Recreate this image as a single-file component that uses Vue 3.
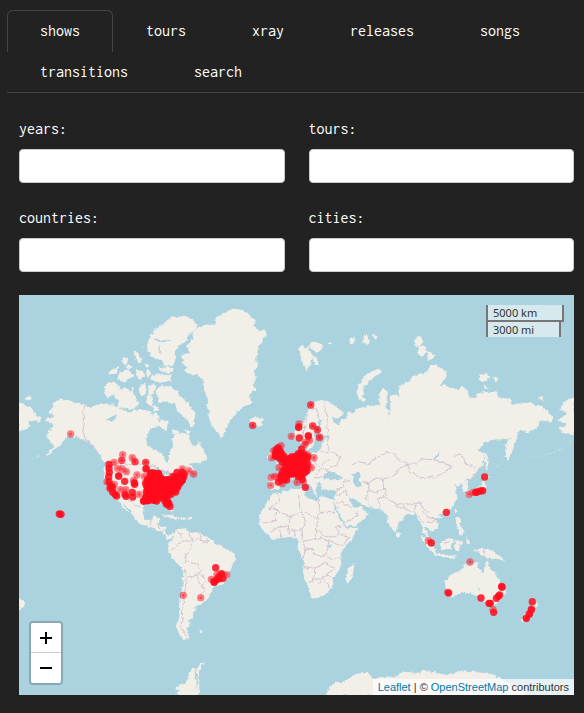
<script setup>
import { ref } from 'vue'

const tabs = ['shows', 'tours', 'xray', 'releases', 'songs', 'transitions', 'search']
const active = ref('shows')
const filters = ['years', 'tours', 'countries', 'cities']

// Land outlines, three drawing units to one map pixel
const land = [
  // North America
  'M87,346 103,340 100,330 113,322 125,312 150,321 193,330 215,340 232,334 250,323 262,330 285,330 305,343 330,352 345,345 375,348 395,350 398,362 410,352 420,366 414,378 426,384 418,392 404,394 388,410 380,432 383,452 410,468 432,478 438,500 447,506 455,492 450,472 466,452 462,430 474,414 500,418 514,440 526,456 540,442 555,472 566,490 545,500 515,504 492,522 516,512 526,526 512,536 500,546 485,550 470,570 450,590 440,602 436,614 450,628 462,640 458,650 448,644 435,622 415,618 390,620 374,630 370,656 380,678 396,680 404,666 420,668 412,688 420,692 440,700 437,715 447,722 460,718 474,704 468,722 450,732 436,722 426,706 410,702 392,694 368,688 345,670 338,650 322,634 308,612 316,634 326,650 314,638 298,616 280,604 266,578 258,555 256,530 262,506 245,488 236,470 220,450 195,432 170,424 145,422 135,438 115,455 98,470 82,478 108,456 100,445 88,437 86,418 92,405 108,392 98,384 80,380 85,368 108,370 100,355Z',
  // Greenland
  'M560,92 540,97 522,112 524,128 506,154 516,172 488,182 494,198 487,206 510,214 497,226 512,236 530,238 548,245 555,265 558,290 568,310 565,330 570,350 572,372 583,396 596,414 600,424 610,426 622,392 637,372 652,350 678,332 700,322 686,300 708,282 698,268 712,246 704,230 715,214 710,192 716,160 724,146 742,122 738,106 718,106 700,94 708,80 690,56 668,46 640,42 612,56 590,72 594,86 566,92Z',
  // Canadian islands
  'M462,66 478,62 505,66 520,78 533,90 530,102 510,116 500,135 480,152 465,170 470,190 460,212 440,210 430,192 415,194 400,188 388,170 386,150 394,122 408,118 402,106 420,98 432,84Z',
  'M415,218 440,216 462,222 455,232 430,230Z M400,240 455,242 455,258 420,262 400,254Z M345,170 358,176 368,192 365,204 350,194Z M352,225 372,230 378,245 362,254 350,240Z M378,204 392,210 385,216Z M275,226 300,212 290,238 270,238Z M312,188 326,190 322,208 308,202Z M300,238 330,222 344,244 325,250 318,262 296,250Z M372,152 372,160 368,156Z M328,208 322,220 340,216Z M385,222 396,232 390,248 382,236Z',
  'M265,265 285,262 300,274 290,286 284,300 266,306 258,288Z M288,285 320,280 336,290 338,276 346,300 360,326 344,340 318,340 296,336 302,318 288,306Z M362,274 378,268 380,292 370,306 360,290Z M388,272 408,270 402,296 388,298Z M384,306 396,302 402,318 398,330 384,324Z M412,286 424,272 448,276 468,282 480,300 500,318 524,350 530,362 520,380 504,372 490,362 476,350 470,328 448,322 432,318 420,320 414,304Z M425,372 446,378 442,404 428,400 420,388Z M402,330 418,344 404,350Z M464,404 474,404 476,414 464,412Z M498,404 514,410 506,416Z M506,376 528,384 516,392Z',
  // South America
  'M475,705 500,700 512,712 545,715 565,728 588,745 613,760 643,775 648,792 638,812 633,822 628,840 613,865 583,875 573,895 551,925 528,932 528,945 518,957 518,970 503,978 513,986 498,1005 513,1032 493,1030 478,1010 473,990 483,965 481,935 490,890 495,825 483,812 465,795 448,765 452,745 465,730Z',
  // Africa
  'M765,593 783,595 813,585 843,580 858,582 855,600 873,612 893,620 903,605 928,612 943,615 941,625 948,645 961,670 973,690 983,705 1013,698 1008,715 993,740 978,755 963,775 965,800 966,820 948,840 942,850 938,870 927,890 910,903 891,909 880,905 872,885 861,860 853,835 856,805 852,790 842,768 838,765 843,742 833,730 818,723 788,728 758,730 738,710 723,690 725,675 725,655 743,625Z',
  // Eurasia
  'M752,582 750,560 752,545 790,547 786,528 772,516 800,510 815,495 835,485 846,474 848,452 858,450 858,472 880,475 905,468 912,450 916,436 938,426 925,422 906,422 899,404 908,386 916,372 900,374 892,398 884,414 890,430 880,450 870,462 858,444 842,440 828,430 828,412 850,396 862,366 872,340 890,322 905,316 923,322 943,330 968,350 971,364 953,370 937,362 943,380 958,390 968,375 983,370 988,350 1003,357 1013,342 1043,335 1073,332 1082,338 1080,300 1093,282 1106,294 1100,330 1108,350 1104,378 1116,350 1114,304 1130,300 1140,310 1140,275 1170,262 1185,242 1210,236 1228,230 1235,210 1250,206 1256,218 1280,230 1276,254 1258,270 1290,276 1320,286 1330,276 1344,286 1350,312 1364,312 1380,295 1405,292 1434,294 1440,308 1475,314 1480,330 1515,325 1540,326 1565,335 1585,350 1603,370 1595,380 1560,372 1560,392 1536,404 1530,412 1498,405 1493,425 1485,450 1475,478 1464,496 1460,465 1465,440 1482,422 1465,430 1430,432 1395,440 1375,470 1396,475 1392,502 1375,530 1360,545 1345,556 1346,590 1334,588 1330,566 1315,572 1303,568 1310,585 1314,610 1300,635 1285,650 1265,656 1256,668 1244,668 1256,686 1256,700 1240,708 1224,695 1216,690 1220,710 1236,736 1230,736 1212,710 1209,685 1196,676 1190,656 1170,655 1150,670 1134,685 1137,698 1125,712 1110,685 1104,658 1083,640 1053,638 1033,630 1010,614 986,602 994,624 1010,640 1024,634 1048,655 1033,675 1008,690 983,694 973,676 960,648 944,620 952,598 948,582 928,586 908,580 905,560 893,558 896,574 888,586 894,602 884,594 878,576 864,556 850,542 870,564 862,572 842,545 828,548 810,556 790,560 776,580Z',
  'M1665,310 1642,318 1622,344 1640,346 1645,358 1616,374 1640,382 1638,396 1620,400 1628,412 1665,420Z M0,325 20,330 38,345 50,366 68,370 60,380 44,374 30,376 28,396 8,404 0,412Z',
  // Australia and New Zealand
  'M1280,858 1295,840 1320,830 1335,815 1350,810 1375,803 1373,820 1390,830 1400,820 1403,797 1410,820 1420,830 1435,850 1455,875 1457,895 1445,915 1425,930 1400,925 1385,910 1370,900 1345,890 1320,895 1295,905 1285,890 1280,870Z M1417,940 1430,942 1424,956 1415,950Z M1538,908 1556,924 1550,938 1540,932Z M1532,940 1544,946 1532,966 1514,980 1506,972 1520,960Z M0,912 18,924 12,936 0,944Z',
  // Islands of Asia
  'M1205,724 1222,732 1248,760 1252,776 1240,772 1220,746Z M1260,745 1290,730 1302,738 1292,764 1268,762Z M1248,776 1294,782 1312,784 1300,788 1262,784Z M1308,738 1332,744 1316,748 1320,770 1310,764Z M1366,764 1388,762 1420,768 1440,782 1456,796 1430,788 1400,786Z M1312,668 1320,672 1322,690 1330,704 1332,718 1322,714 1312,690Z M1135,708 1143,716 1140,726 1132,722Z M1400,476 1406,488 1409,512 1404,526 1400,506Z M1396,536 1412,546 1400,552Z M1398,556 1402,578 1380,592 1350,600 1340,602 1352,590 1384,576Z M1308,642 1314,648 1310,654Z M1344,728 1350,740 1344,748Z M1258,664 1268,664 1264,672Z',
  // Atlantic and Indian islands
  'M693,374 708,368 730,370 736,378 722,390 700,392Z M980,850 992,816 1007,802 1006,822 993,858 985,862Z M770,450 784,452 784,468 796,480 800,500 776,506 782,484 768,468Z M750,474 764,472 760,490 748,492Z M430,660 460,662 480,672 462,670Z M484,668 502,670 492,674Z M508,668 518,670 512,674Z M540,1008 550,1008 546,1014Z M20,310 30,306 38,310 30,315Z',
  // Arctic Ocean islands
  'M841,158 852,154 858,164 868,154 874,172 880,186 866,226 858,214 850,196 846,180Z M872,148 884,142 906,148 910,160 898,170 886,164 874,158Z M882,184 892,190 898,208 888,208Z M930,148 940,146 936,152Z M1020,270 1040,242 1064,228 1080,220 1088,232 1068,242 1050,256 1036,276 1030,306 1038,316 1024,314 1016,298Z M992,134 1010,128 1008,142 996,146Z M1030,130 1044,118 1052,134 1042,148 1030,144Z M1060,122 1074,124 1070,136Z M1190,136 1202,122 1212,138 1206,150 1190,154Z M1198,156 1216,154 1222,174 1210,184 1198,172Z M1226,170 1238,172 1246,186 1228,196Z M1380,238 1404,236 1412,246 1398,258 1384,258Z M1420,248 1438,252 1430,258Z M1396,272 1408,278 1400,282Z M1558,310 1574,308 1570,314Z',
  // Antarctica
  'M536,1200 538,1140 530,1122 556,1102 548,1112 538,1128 540,1200 474,1200 484,1186 470,1182 480,1172 500,1168 512,1146 510,1134 524,1120Z M920,1200 945,1165 965,1166 990,1152 1020,1134 1045,1132 1060,1150 1130,1145 1160,1132 1200,1136 1210,1126 1240,1132 1290,1142 1320,1130 1380,1132 1430,1142 1460,1164 1490,1170 1530,1200Z',
]

const water = [
  'M918,535 928,528 944,534 956,538 972,550 954,556 934,552 914,556 912,546Z',
  'M1000,538 1016,530 1024,540 1018,556 1030,574 1018,580 1006,568Z',
  'M1242,490 1256,480 1262,464 1260,482 1248,492Z',
  'M264,374 276,362 294,360 282,380Z',
  'M395,528 416,516 440,530 456,536 450,544 436,536 420,534Z',
  'M1378,872 1384,880 1380,884Z',
  'M926,750 940,752 934,760Z',
  'M404,128 416,140 440,142 456,134 440,136 418,134Z',
  'M422,150 428,170 424,178 418,160Z',
]

const borders = [
  'M193,330 V426 L215,445 232,466 244,486',
  'M262,508 H385 L410,516 430,528 470,536 490,520',
  'M285,602 322,608 345,624 366,640',
  'M392,690 400,672 M414,690 424,700 M440,702 430,715',
  'M480,708 490,738 510,738 520,758 500,776 503,800 490,806 M512,712 520,740 542,730 555,742 572,738 M545,718 548,738 M564,730 562,745 M457,765 478,748 490,738 M500,825 502,850 496,900 490,960 486,1000 508,1030 M500,800 530,806 548,830 530,840 508,846 M548,835 562,860 548,872 M530,840 540,862 548,872 556,880 548,900',
  'M778,594 782,620 746,640 770,642 816,666 845,648 900,670 M770,642 770,680 728,680 M816,666 808,690 780,694 758,712 M845,648 836,600 M901,612 V652 H948 M848,650 860,680 846,704 816,706 M901,652 892,700 910,720 935,728 960,716 950,698 968,692 M780,694 786,728 M808,690 812,722 M824,706 830,725 M846,704 850,740 892,730 892,700 M850,740 860,760 852,790 M892,730 930,735 926,760 920,784 888,780 880,760 856,766 M960,716 990,728 968,755 930,735 M920,784 940,790 965,790 M855,815 888,820 920,804 948,820 M888,820 884,856 866,862 M884,856 906,850 926,836 M936,850 924,836 948,820 M892,870 910,850 928,865 930,885',
  'M865,365 856,400 850,430 M880,338 896,346 900,374 M914,330 922,350 924,390 926,410 M928,424 924,450 940,475 962,485 958,510 930,520 M908,470 940,476 M930,490 910,512 M880,475 888,505 906,518 890,540 M906,518 930,530 M845,490 842,515 860,535 M884,548 912,548',
  'M998,510 1020,500 1046,506 1070,490 1100,470 1125,478 1140,496 1168,508 M1168,508 1190,506 1210,492 1242,494 1270,500 1300,516 1278,532 1250,545 1206,548 1168,528 1168,508 M1305,484 1320,478 1338,490 1340,508 1368,516 1365,545 1340,556 M1095,550 1120,548 1140,520 1168,508 M1020,560 1050,566 1068,550 1095,550 1090,575 1104,588 1098,610 1130,625 1160,628 1190,626 1205,620 1212,640 1230,655 M1050,566 1048,584 1072,595 1095,578 M1048,584 1042,610 1055,637 M1095,600 1080,612 1084,638 M1130,625 1134,635 1162,640 1178,650 M1190,630 1185,650 1204,670 1214,684 M1214,648 1230,668 1250,672 1238,684 1224,680 M948,588 974,578 978,558 1000,560 M952,604 968,594 980,585 984,600 M952,624 970,622 998,638 M1012,652 1018,664 980,678 M1272,746 1292,740 M1396,765 V786',
]

// Show locations as [x, y]
const light = [
  [155, 417], [311, 479], [340, 488], [308, 496], [348, 500], [380, 502], [285, 502], [296, 520], [310, 522], [322, 530], [299, 543], [354, 540], [380, 522], [264, 560], [286, 568], [304, 584], [320, 584], [360, 598], [376, 544], [490, 522], [510, 528], [524, 537], [344, 556],
  [308, 496], [348, 500], [380, 502],
  [701, 391], [875, 330], [839, 396], [840, 387], [881, 393], [895, 404], [902, 426], [817, 424], [868, 422], [872, 436], [860, 442], [858, 448],
  [701, 391], [875, 330], [881, 393], [895, 404], [901, 428],
  [757, 547], [768, 544], [755, 571], [786, 452], [764, 468], [758, 488], [780, 518], [834, 562], [866, 480], [885, 488], [877, 518], [780, 548], [790, 566], [853, 560],
  [1350, 598], [1363, 592], [1228, 737], [1353, 801], [1286, 892],
  [594, 838], [577, 853], [623, 839], [608, 836], [493, 901], [545, 908], [1422, 944], [1538, 942], [1531, 958], [1522, 970],
]
const strong = [
  [121, 657], [126, 658], [270, 508], [270, 520], [271, 532], [269, 545], [270, 561], [275, 572], [273, 580], [281, 592], [288, 598], [293, 603], [299, 543], [317, 559], [346, 564], [347, 568], [318, 598], [321, 604], [340, 592], [341, 606], [281, 578], [382, 521], [397, 534], [418, 536], [386, 556], [380, 608], [374, 618], [386, 617], [407, 615], [444, 620], [446, 628], [453, 635], [474, 532], [485, 540], [490, 532], [496, 538], [490, 556],
  [839, 397], [841, 429], [868, 423], [848, 462], [777, 458], [780, 466], [772, 473], [784, 474], [770, 482], [776, 485], [866, 507], [862, 520], [792, 540], [804, 540], [803, 555], [778, 561], [788, 548], [850, 553], [858, 532], [859, 577],
  [1397, 546], [1391, 587], [1384, 588], [1374, 591], [1370, 592], [1282, 652], [1237, 744], [590, 818], [607, 837], [585, 862], [592, 855], [602, 851], [612, 850], [598, 848], [586, 860], [1289, 894],
  [1448, 874], [1449, 877], [1386, 909], [1410, 925], [1414, 925], [1432, 910], [1438, 904], [1442, 900], [1424, 952], [1540, 920], [1537, 944], [1522, 970], [1531, 957],
]

// Crowded areas as rows of locations: [y, first x, last x]
const rows = [
  [534, 394, 422], [544, 392, 424], [544, 462, 500], [553, 386, 490], [562, 380, 486], [571, 382, 480], [580, 386, 476], [589, 382, 470], [598, 384, 462], [607, 380, 450], [616, 374, 390], [616, 405, 415], [618, 438, 448], [626, 442, 450],
  [463, 772, 784], [472, 770, 788], [481, 770, 796], [475, 838, 856], [484, 818, 866], [491, 784, 866], [500, 790, 860], [509, 802, 862], [518, 798, 866], [527, 792, 864], [536, 788, 856], [544, 786, 808], [544, 838, 850], [552, 788, 802],
]
const crowded = rows.flatMap(([y, from, to]) => {
  const points = []
  for (let x = from; x <= to; x += 8) points.push([x, y + (x % 3)])
  return points
})
const solid = [...strong, ...crowded]
</script>

<template>
  <main class="page">
    <nav class="tabs">
      <a
        v-for="tab in tabs"
        :key="tab"
        :href="'#' + tab"
        class="tab"
        :class="{ active: tab === active }"
        @click.prevent="active = tab"
      >{{ tab }}</a>
    </nav>

    <section class="content">
      <form class="filters" @submit.prevent>
        <div v-for="name in filters" :key="name" class="field">
          <label :for="'filter-' + name">{{ name }}:</label>
          <input :id="'filter-' + name" type="text" autocomplete="off" />
        </div>
      </form>

      <div class="map">
        <svg class="world" viewBox="0 0 1665 1200" preserveAspectRatio="xMidYMid slice" aria-hidden="true">
          <defs>
            <filter id="coast" x="0" y="0" width="1665" height="1200" filterUnits="userSpaceOnUse">
              <feTurbulence type="fractalNoise" baseFrequency="0.07" numOctaves="3" seed="4" result="noise" />
              <feDisplacementMap in="SourceGraphic" in2="noise" scale="14" xChannelSelector="R" yChannelSelector="G" />
            </filter>
          </defs>
          <g filter="url(#coast)">
            <rect x="-40" y="-40" width="1745" height="1280" fill="#aad3df" />
            <path v-for="(d, i) in land" :key="'l' + i" :d="d" class="land" />
            <path v-for="(d, i) in water" :key="'w' + i" :d="d" class="water" />
            <path v-for="(d, i) in borders" :key="'b' + i" :d="d" class="border" />
            <path d="M60,484 Q30,494 8,490 M1655,440 Q1610,485 1530,487 M1408,535 1460,496" class="chain" />
          </g>
          <g class="light">
            <g v-for="([x, y], i) in light" :key="'m' + i">
              <circle :cx="x" :cy="y" r="11" />
              <circle :cx="x" :cy="y" r="4" />
            </g>
          </g>
          <g class="strong">
            <circle v-for="([x, y], i) in solid" :key="'s' + i" :cx="x" :cy="y" r="11" />
          </g>
        </svg>

        <div class="scale">
          <div class="scale-line km">5000 km</div>
          <div class="scale-line mi">3000 mi</div>
        </div>

        <div class="zoom">
          <button type="button" aria-label="Zoom in">
            <svg width="14" height="14" viewBox="0 0 14 14"><path d="M7 1V13M1 7H13" /></svg>
          </button>
          <button type="button" aria-label="Zoom out">
            <svg width="14" height="14" viewBox="0 0 14 14"><path d="M1 7H13" /></svg>
          </button>
        </div>

        <div class="credit">
          <a href="#leaflet">Leaflet</a> | © <a href="#osm">OpenStreetMap</a> contributors
        </div>
      </div>
    </section>
  </main>
</template>

<style>
body {
  background: #222;
}
</style>

<style scoped>
.page {
  padding: 10px 0 18px 7px;
  color: #fff;
  font-family: Inconsolata, "Noto Sans Mono CJK JP", "Liberation Mono", monospace;
  font-size: 16px;
  line-height: 20px;
}
.tabs {
  display: flex;
  flex-wrap: wrap;
  border-bottom: 1px solid #444;
}
.tab {
  box-sizing: border-box;
  height: 42px;
  margin-bottom: -1px;
  padding: 10px 32px;
  border: 1px solid transparent;
  border-bottom: 0;
  border-radius: 6px 6px 0 0;
  color: #fff;
  text-decoration: none;
}
.tab.active {
  border-color: #444;
}
.content {
  padding: 26px 10px 0 12px;
}
.filters {
  display: grid;
  grid-template-columns: 1fr 1fr;
  gap: 25px 24px;
}
.field {
  display: flex;
  flex-direction: column;
  gap: 10px;
}
input {
  box-sizing: border-box;
  width: 100%;
  height: 34px;
  padding: 6px 12px;
  border: 1px solid #ccc;
  border-radius: 4px;
  background: #fff;
  font: inherit;
}
.map {
  position: relative;
  height: 400px;
  margin-top: 23px;
  overflow: hidden;
  background: #aad3df;
}
.world {
  display: block;
  width: 100%;
  height: 100%;
}
.land {
  fill: #f2efe9;
  stroke: #f2efe9;
  stroke-width: 3;
}
.water {
  fill: #aad3df;
}
.border {
  fill: none;
  stroke: #d3c2d0;
  stroke-width: 3;
}
.chain {
  fill: none;
  stroke: #f2efe9;
  stroke-width: 2;
  stroke-dasharray: 7 6;
  opacity: 0.7;
}
.light {
  fill: #ff1020;
  fill-opacity: 0.5;
}
.strong {
  fill: #ff0c1c;
  fill-opacity: 0.85;
}
.scale {
  position: absolute;
  top: 10px;
  right: 10px;
  width: 78px;
  color: #333;
  font: 11px/12px "Noto Sans", sans-serif;
}
.scale-line {
  box-sizing: border-box;
  height: 17px;
  padding: 2px 5px 1px;
  border: 2px solid #777;
  border-top: 0;
  background: rgba(255, 255, 255, 0.5);
}
.mi {
  width: 75px;
  height: 15px;
  padding-top: 2px;
  border-bottom: 0;
}
.zoom {
  position: absolute;
  left: 10px;
  bottom: 10px;
  display: flex;
  flex-direction: column;
  border: 2px solid rgba(0, 0, 0, 0.2);
  border-radius: 4px;
  background-clip: padding-box;
}
.zoom button {
  box-sizing: border-box;
  display: flex;
  align-items: center;
  justify-content: center;
  width: 30px;
  height: 30px;
  padding: 0;
  border: 0;
  border-radius: 0 0 2px 2px;
  background: #fff;
}
.zoom button:first-child {
  border-bottom: 1px solid #ccc;
  border-radius: 2px 2px 0 0;
}
.zoom path {
  stroke: #000;
  stroke-width: 2;
}
.credit {
  position: absolute;
  right: 0;
  bottom: 0;
  padding: 0 5px;
  background: rgba(255, 255, 255, 0.7);
  color: #333;
  font: 11px/16px "Liberation Sans", sans-serif;
}
.credit a {
  color: #0078a8;
  text-decoration: none;
}
</style>
